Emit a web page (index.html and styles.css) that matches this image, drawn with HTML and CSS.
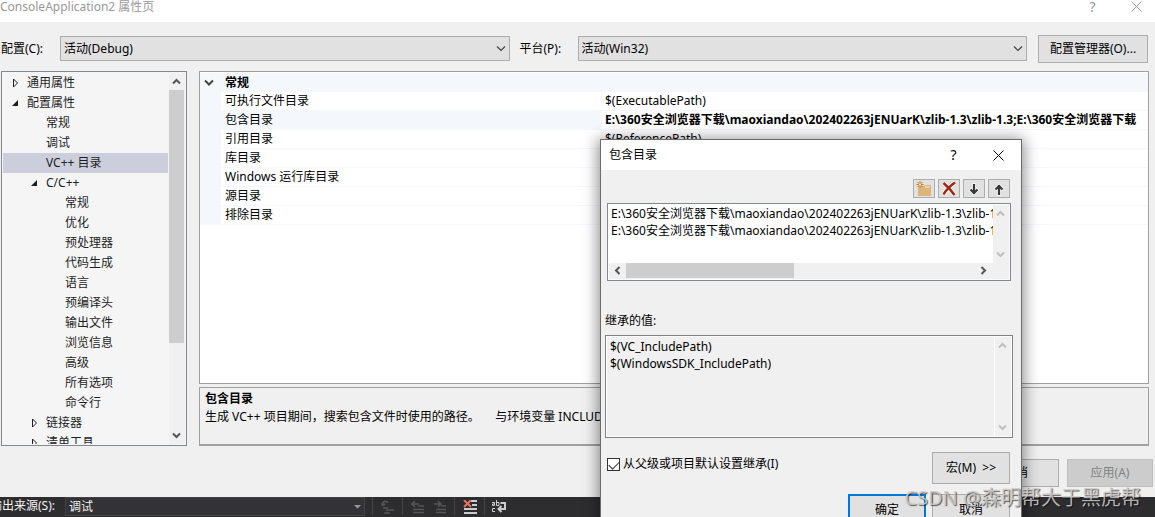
FILE: index.html
```html
<!DOCTYPE html>
<html lang="zh-CN">
<head>
<meta charset="utf-8">
<title>ConsoleApplication2 属性页</title>
<link rel="stylesheet" href="styles.css">
</head>
<body>
<main class="window">
  <header class="titlebar">
    <h1 class="title">ConsoleApplication2 属性页</h1>
    <button class="caption-button" aria-label="帮助">?</button>
    <button class="caption-button" aria-label="关闭"><svg width="11" height="11" viewBox="0 0 11 11"><path d="M.5.5l10 10M10.5.5l-10 10" stroke="currentColor" fill="none"/></svg></button>
  </header>
  <section class="config-bar">
    <label class="config-label" for="config">配置(C):</label>
    <div class="combo combo-config">
      <select id="config"><option>活动(Debug)</option></select>
      <svg class="combo-arrow" width="10" height="6" viewBox="0 0 10 6"><path d="M1 .5l4 4 4-4" stroke="#444" stroke-width="1.2" fill="none"/></svg>
    </div>
    <label class="platform-label" for="platform">平台(P):</label>
    <div class="combo combo-platform">
      <select id="platform"><option>活动(Win32)</option></select>
      <svg class="combo-arrow" width="10" height="6" viewBox="0 0 10 6"><path d="M1 .5l4 4 4-4" stroke="#444" stroke-width="1.2" fill="none"/></svg>
    </div>
    <button class="button manager">配置管理器(O)...</button>
  </section>
  <section class="content">
    <nav class="tree">
      <ul class="tree-list">
        <li class="level-1"><svg class="twisty" width="8" height="10" viewBox="0 0 8 10"><path d="M2.500 1v8l4-4z" fill="none" stroke="#222"/></svg>通用属性</li>
        <li class="level-1"><svg class="twisty" width="8" height="10" viewBox="0 0 8 10"><path d="M7 2v6H1z" fill="#1e1e1e"/></svg>配置属性</li>
        <li class="level-2">常规</li>
        <li class="level-2">调试</li>
        <li class="level-2 selected">VC++ 目录</li>
        <li class="level-2"><svg class="twisty" width="8" height="10" viewBox="0 0 8 10"><path d="M7 2v6H1z" fill="#1e1e1e"/></svg>C/C++</li>
        <li class="level-3">常规</li>
        <li class="level-3">优化</li>
        <li class="level-3">预处理器</li>
        <li class="level-3">代码生成</li>
        <li class="level-3">语言</li>
        <li class="level-3">预编译头</li>
        <li class="level-3">输出文件</li>
        <li class="level-3">浏览信息</li>
        <li class="level-3">高级</li>
        <li class="level-3">所有选项</li>
        <li class="level-3">命令行</li>
        <li class="level-2"><svg class="twisty" width="8" height="10" viewBox="0 0 8 10"><path d="M2.500 1v8l4-4z" fill="none" stroke="#222"/></svg>链接器</li>
        <li class="level-2"><svg class="twisty" width="8" height="10" viewBox="0 0 8 10"><path d="M2.500 1v8l4-4z" fill="none" stroke="#222"/></svg>清单工具</li>
      </ul>
      <div class="scrollbar">
        <svg width="15" height="17" viewBox="0 0 15 17"><path d="M4 10.500l3.500-3.500 3.500 3.500" stroke="#555" stroke-width="2" fill="none"/></svg>
        <div class="tree-thumb"></div>
        <svg width="15" height="17" viewBox="0 0 15 17"><path d="M4 6.500l3.500 3.500 3.500-3.500" stroke="#555" stroke-width="2" fill="none"/></svg>
      </div>
    </nav>
    <div class="details">
      <div class="grid-box">
        <table class="grid">
          <colgroup><col class="col-gutter"><col class="col-name"><col></colgroup>
          <thead>
            <tr><th class="toggle"><svg width="10" height="8" viewBox="0 0 10 8"><path d="M1 1.500l4 4 4-4" stroke="#444" stroke-width="2" fill="none"/></svg></th><th colspan="2">常规</th></tr>
          </thead>
          <tbody>
            <tr><td></td><td>可执行文件目录</td><td>$(ExecutablePath)</td></tr>
            <tr class="current"><td></td><td>包含目录</td><td>E:\360安全浏览器下载\maoxiandao\202402263jENUarK\zlib-1.3\zlib-1.3;E:\360安全浏览器下载</td></tr>
            <tr><td></td><td>引用目录</td><td>$(ReferencePath)</td></tr>
            <tr><td></td><td>库目录</td><td></td></tr>
            <tr><td></td><td>Windows 运行库目录</td><td></td></tr>
            <tr><td></td><td>源目录</td><td></td></tr>
            <tr><td></td><td>排除目录</td><td></td></tr>
          </tbody>
        </table>
      </div>
      <div class="description">
        <h2>包含目录</h2>
        <p>生成 VC++ 项目期间，搜索包含文件时使用的路径。 &nbsp;&nbsp;&nbsp;&nbsp;与环境变量 INCLUDE 相对应。</p>
      </div>
    </div>
  </section>
  <footer class="actions">
    <button class="button wide">取消</button>
    <button class="button wide" disabled>应用(A)</button>
  </footer>
</main>

<section class="output-bar">
  <label class="output-label" for="source"><span>输出来源(S):</span></label>
  <div class="combo combo-dark">
    <select id="source"><option>调试</option></select>
    <svg class="combo-arrow" width="7" height="4" viewBox="0 0 7 4"><path d="M0 0h7L3.500 3.500z" fill="#999"/></svg>
  </div>
  <div class="tool-group"><button class="tool" aria-label="转到源"><svg width="14" height="14" viewBox="0 0 14 14"><path d="M2 5V3.500C2 .5 6.500.5 6.500 3M0 3.500L2 5.500l2.500-2M2 8h5M5 10h8M3 13h6" stroke="#555558" stroke-width="1.500" fill="none"/></svg></button></div>
  <div class="tool-group"><button class="tool" aria-label="上一条"><svg width="14" height="14" viewBox="0 0 14 14"><path d="M1 4h7M4 1L1 4l3 3M7 6h6M2 9.500h11M2 12.500h11" stroke="#555558" stroke-width="1.700" fill="none"/></svg></button><button class="tool" aria-label="下一条"><svg width="14" height="14" viewBox="0 0 14 14"><path d="M1 4h7M5 1l3 3-3 3M8 6h5M3 9.500h10M3 12.500h10" stroke="#555558" stroke-width="1.700" fill="none"/></svg></button></div>
  <div class="tool-group"><button class="tool" aria-label="全部清除"><svg width="14" height="14" viewBox="0 0 14 14"><path d="M8 1h6M9 5h5M1 9h13M1 13h13" stroke="#ccc" stroke-width="2"/><path d="M1 0l7 7M8 0L1 7" stroke="#e8765c" stroke-width="2"/></svg></button></div>
  <div class="tool-group"><button class="tool" aria-label="自动换行"><svg width="15" height="14" viewBox="0 0 15 14"><path d="M0 2.500h2.500v3H.5v-1.500h2M4.500 0v5.500H7v-3H4.500M3 8.500H.5v3H3" stroke="#ccc" fill="none"/><path d="M8.500 3H13v6H7M9.500 6L6.500 9l3 3" stroke="#ccc" stroke-width="2" fill="none"/></svg></button></div>
</section>

<section class="dialog" role="dialog" aria-label="包含目录">
  <header class="dialog-title">
    <h2 class="title">包含目录</h2>
    <button class="caption-button" aria-label="帮助">?</button>
    <button class="caption-button" aria-label="关闭"><svg width="11" height="11" viewBox="0 0 11 11"><path d="M.5.5l10 10M10.5.5l-10 10" stroke="currentColor" fill="none"/></svg></button>
  </header>
  <div class="list-tools">
    <button class="list-tool" aria-label="新行"><svg width="16" height="16" viewBox="0 0 16 16"><path d="M2 5h6l1-1h6v11H2z" fill="#dcb67a"/><path d="M9 6h5" stroke="#f7ecd8"/><path d="M4 0v7M.5 3.500h7M1.500 1l5 5M6.500 1l-5 5" stroke="#c27d1a"/><circle cx="4" cy="3.500" r="1" fill="#fff"/></svg></button>
    <button class="list-tool" aria-label="删除"><svg width="16" height="16" viewBox="0 0 16 16"><path d="M2.500 2C6 5 10 9 13.500 14M14 1.500C9 5 5 9 2.500 13.500" stroke="#fff" stroke-width="4" fill="none"/><path d="M2.500 2C6 5 10 9 13.500 14M14 1.500C9 5 5 9 2.500 13.500" stroke="#a1260d" stroke-width="2.500" fill="none"/></svg></button>
    <button class="list-tool" aria-label="下移"><svg width="16" height="16" viewBox="0 0 16 16"><path d="M8 2v11M4 8l4 4 4-4" stroke="#f6f6f6" stroke-width="4" fill="none"/><path d="M8 3v10M4.500 8.500L8 12l3.500-3.500" stroke="#383838" stroke-width="2.200" fill="none"/></svg></button>
    <button class="list-tool" aria-label="上移"><svg width="16" height="16" viewBox="0 0 16 16"><path d="M8 15V4M4 9l4-4 4 4" stroke="#f6f6f6" stroke-width="4" fill="none"/><path d="M8 14V4M4.500 8.500L8 5l3.500 3.500" stroke="#383838" stroke-width="2.200" fill="none"/></svg></button>
  </div>
  <div class="path-list">
    <div class="path-area">
      <ul class="lines">
        <li>E:\360安全浏览器下载\maoxiandao\202402263jENUarK\zlib-1.3\zlib-1.3</li>
        <li>E:\360安全浏览器下载\maoxiandao\202402263jENUarK\zlib-1.3\zlib-1.3</li>
      </ul>
      <div class="scrollbar idle">
        <svg width="15" height="17" viewBox="0 0 15 17"><path d="M4 10.500l3.500-3.500 3.500 3.500" stroke="#bfbfbf" stroke-width="2" fill="none"/></svg>
        <svg width="15" height="17" viewBox="0 0 15 17"><path d="M4 6.500l3.500 3.500 3.500-3.500" stroke="#bfbfbf" stroke-width="2" fill="none"/></svg>
      </div>
    </div>
    <div class="hscroll">
      <svg width="17" height="15" viewBox="0 0 17 15"><path d="M10.500 4L7 7.500l3.500 3.500" stroke="#555" stroke-width="2" fill="none"/></svg>
      <div class="hscroll-track"><div class="hscroll-thumb"></div></div>
      <svg width="17" height="15" viewBox="0 0 17 15"><path d="M6.500 4L10 7.500 6.500 11" stroke="#555" stroke-width="2" fill="none"/></svg>
    </div>
  </div>
  <h3 class="inherited-title">继承的值:</h3>
  <div class="inherited">
    <ul class="lines">
      <li>$(VC_IncludePath)</li>
      <li>$(WindowsSDK_IncludePath)</li>
    </ul>
    <div class="scrollbar idle edged">
      <svg width="15" height="17" viewBox="0 0 15 17"><path d="M4 10.500l3.500-3.500 3.500 3.500" stroke="#bfbfbf" stroke-width="2" fill="none"/></svg>
      <svg width="15" height="17" viewBox="0 0 15 17"><path d="M4 6.500l3.500 3.500 3.500-3.500" stroke="#bfbfbf" stroke-width="2" fill="none"/></svg>
    </div>
  </div>
  <div class="dialog-options">
    <label class="check"><input type="checkbox" checked>从父级或项目默认设置继承(I)</label>
    <button class="button macro">宏(M) &nbsp;&gt;&gt;</button>
  </div>
  <div class="dialog-actions">
    <button class="button primary">确定</button>
    <button class="button">取消</button>
  </div>
</section>
<div class="watermark">CSDN @森明帮大于黑虎帮</div>
</body>
</html>
```

FILE: styles.css
```css
* { box-sizing: border-box; }

body {
  margin: 0;
  height: 100vh;
  overflow: hidden;
  position: relative;
  display: flex;
  flex-direction: column;
  background: #2d2d30;
  color: #000;
  font: 12px/18px "Noto Sans", "Noto Sans CJK SC", sans-serif;
}

h1, h2, h3, p, ul { margin: 0; padding: 0; font: inherit; }
ul { list-style: none; }
svg { display: block; flex: none; }
button, select, input { font: inherit; color: inherit; margin: 0; }

.window { flex: none; background: #f0f0f0; }

/* Title bars */
.titlebar {
  display: flex;
  align-items: center;
  height: 22px;
  padding: 0 0 9px;
  background: #fff;
  color: #999;
}
.title { flex: 1; white-space: nowrap; }
.caption-button {
  display: grid;
  place-items: center;
  width: 45px;
  height: 24px;
  padding: 0;
  border: 0;
  background: none;
  font-size: 14px;
}
.titlebar .caption-button { width: 51px; }
.titlebar .caption-button:last-child { width: 37px; }

/* Configuration row */
.config-bar {
  display: flex;
  align-items: center;
  height: 49px;
  padding: 4px 7px 0 1px;
}
.config-label { width: 59px; }
.platform-label { width: 58px; margin-left: 10px; }
.combo { position: relative; flex: 1; min-width: 0; }
.combo select {
  appearance: none;
  display: block;
  width: 100%;
  height: 25px;
  padding: 0 20px 0 3px;
  border: 1px solid #adadad;
  border-radius: 0;
  background: #e1e1e1;
}
.combo-arrow { position: absolute; right: 4px; top: 10px; pointer-events: none; }
.button {
  height: 32px;
  width: 78px;
  padding: 0;
  border: 1px solid #adadad;
  border-radius: 0;
  background: #e1e1e1;
  white-space: nowrap;
}
.manager { width: 110px; height: 28px; margin-left: 11px; }

/* Tree and property grid */
.content {
  display: flex;
  gap: 12px;
  height: 375px;
  padding: 0 6px 0 1px;
}
.tree {
  display: flex;
  width: 186px;
  padding: 1px;
  overflow: hidden;
  border: 1px solid #828790;
  background: #f5f5f5;
  color: #1e1e1e;
}
.tree-list { flex: 1; margin-right: 1px; overflow: hidden; }
.tree-list li {
  display: flex;
  align-items: center;
  height: 20px;
  white-space: nowrap;
}
.twisty { width: 8px; margin: 0 8px 0 -16px; }
.level-1 { padding-left: 24px; }
.level-2 { padding-left: 43px; }
.level-3 { padding-left: 62px; }
.selected { background: #cccedb; }

.scrollbar {
  flex: none;
  display: flex;
  flex-direction: column;
  width: 16px;
  padding-right: 1px;
  background: #f0f0f0;
}
.tree-thumb { width: 15px; height: 253px; margin-bottom: auto; background: #cdcdcd; }
.idle { justify-content: space-between; }
.edged { border-left: 1px solid #fff; }

.details { flex: 1; min-width: 0; display: flex; flex-direction: column; gap: 3px; }
.grid-box {
  flex: 1;
  padding-top: 1px;
  overflow: hidden;
  border: 1px solid #a0a0a0;
  background: #fff;
}
.grid { width: 100%; table-layout: fixed; border-spacing: 0; }
.col-gutter { width: 21px; }
.col-name { width: 380px; }
.grid th, .grid td {
  height: 19px;
  padding: 0 0 0 4px;
  overflow: hidden;
  line-height: 18px;
  text-align: left;
  white-space: nowrap;
}
.grid th { background: #f4f7fc; font-weight: bold; }
.grid .toggle { padding-left: 4px; }
.grid td { border-bottom: 1px solid #f4f7fc; }
.grid td:first-child, .grid .current td:nth-child(2) { background: #f4f7fc; }
.grid td:last-child { border-left: 1px solid #f4f7fc; padding-left: 3px; }
.grid .current td:last-child { font-weight: bold; }

.description {
  height: 59px;
  padding: 2px 5px;
  overflow: hidden;
  border: 1px solid #a0a0a0;
  border-bottom-width: 2px;
  white-space: nowrap;
}
.description h2 { font-weight: bold; }

.actions {
  display: flex;
  justify-content: flex-end;
  gap: 8px;
  padding: 13px 2px 10px;
}
.wide { width: 86px; height: 28px; }
.button:disabled { border-color: #bfbfbf; background: #ccc; color: #838383; }

/* Output toolbar */
.output-bar {
  flex: 1;
  display: flex;
  align-items: flex-start;
  background: #2d2d30;
  color: #f1f1f1;
}
.output-label {
  display: flex;
  justify-content: flex-end;
  width: 65px;
  padding-right: 10px;
  overflow: hidden;
  white-space: nowrap;
}
.combo-dark { flex: none; width: 300px; }
.combo-dark select { height: 19px; border-color: #434346; background: #333337; }
.combo-dark .combo-arrow { top: 8px; }
.tool-group {
  display: flex;
  gap: 8px;
  height: 18px;
  margin-left: 7px;
  padding-left: 8px;
  border-left: 1px solid #46464a;
}
.tool { padding: 2px 0 0; border: 0; background: none; }
.tool-group:last-child { padding-left: 7px; }

/* Include directories dialog */
.dialog {
  position: absolute;
  left: 600px;
  top: 139px;
  width: 422px;
  border: 1px solid #6b6b6b;
  background: #f0f0f0;
  box-shadow: 0 2px 14px 2px rgba(0, 0, 0, .45);
}
.dialog-title {
  display: flex;
  align-items: center;
  height: 30px;
  padding-left: 8px;
  background: #fff;
}
.list-tools { display: flex; justify-content: flex-end; gap: 3px; padding: 9px 11px 5px; }
.list-tool {
  display: grid;
  place-items: center;
  width: 22px;
  height: 19px;
  padding: 0;
  border: 1px solid #adadad;
  background: #e1e1e1;
}
.path-list {
  margin: 0 10px 0 6px;
  padding: 1px;
  border: 1px solid #828790;
  background: #fff;
}
.path-area { display: flex; height: 58px; }
.lines { flex: 1; min-width: 0; overflow: hidden; padding-left: 2px; }
.lines li { height: 17px; line-height: 17px; white-space: nowrap; }
.hscroll { display: flex; height: 16px; padding-right: 17px; background: #f0f0f0; }
.hscroll-track { flex: 1; }
.hscroll-thumb { width: 48%; height: 15px; background: #cdcdcd; }
.inherited-title { margin: 31px 0 5px 4px; }
.inherited {
  display: flex;
  height: 103px;
  margin: 0 8px 0 4px;
  padding: 1px;
  border: 1px solid #828282;
  box-shadow: inset 0 0 0 1px #fff;
}
.inherited .scrollbar { width: 17px; }
.inherited .lines { padding-left: 3px; padding-top: 1px; }
.dialog-options {
  display: flex;
  justify-content: space-between;
  align-items: center;
  padding: 14px 11px 0 6px;
}
.check { display: flex; align-items: center; gap: 3px; margin-bottom: 8px; }
.check input {
  appearance: none;
  width: 13px;
  height: 13px;
  border: 1px solid #333;
  background: #fff;
}
.check input:checked::before {
  content: "";
  display: block;
  width: 9px;
  height: 5px;
  margin: 2px 1px;
  border: solid #333;
  border-width: 0 0 1px 1px;
  transform: rotate(-45deg);
}
.dialog-actions { display: flex; justify-content: flex-end; gap: 6px; padding: 10px 11px; }
.primary { border: 2px solid #0078d7; }

.watermark {
  position: absolute;
  right: 14px;
  bottom: 4px;
  color: rgba(205, 205, 205, .85);
  font-size: 20px;
  line-height: 30px;
  white-space: nowrap;
  text-shadow: 1px 1px 1px rgba(0, 0, 0, .6);
  pointer-events: none;
}
```
